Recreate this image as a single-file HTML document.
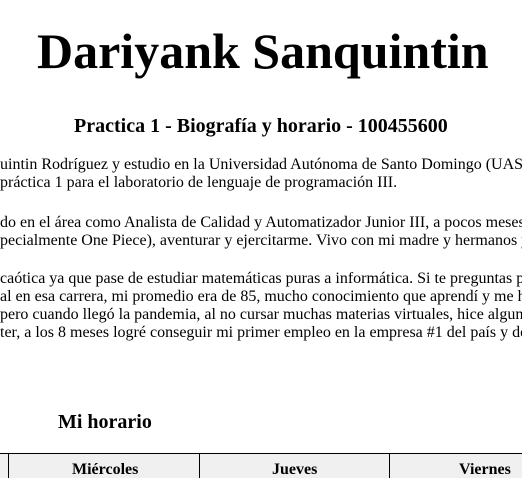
<!DOCTYPE html>
<html><head><meta charset="utf-8"><style>
html,body{margin:0;padding:0;width:522px;height:478px;overflow:hidden;background:#fff;font-family:"Liberation Serif",serif;color:#000;position:relative}
.a{position:absolute;white-space:nowrap}
.p{font-size:16px;left:0;width:522px;overflow:hidden}
</style></head><body>
<div class="a" style="left:37px;top:21px;font-size:50px;font-weight:bold;line-height:60px">Dariyank Sanquintin</div>
<div class="a" style="left:74px;top:115px;font-size:20px;font-weight:bold;line-height:23px">Practica 1 - Biografía y horario - 100455600</div>
<div class="a p" style="top:156px;line-height:18px">uintin Rodríguez y estudio en la Universidad Autónoma de Santo Domingo (UASD)<br>práctica 1 para el laboratorio de lenguaje de programación III.</div>
<div class="a p" style="top:214px;line-height:18px">do en el área como Analista de Calidad y Automatizador Junior III, a pocos meses de<br>pecialmente One Piece), aventurar y ejercitarme. Vivo con mi madre y hermanos y</div>
<div class="a p" style="top:270px;line-height:18px">caótica ya que pase de estudiar matemáticas puras a informática. Si te preguntas por<br>al en esa carrera, mi promedio era de 85, mucho conocimiento que aprendí y me hubiera<br>pero cuando llegó la pandemia, al no cursar muchas materias virtuales, hice algunos<br>ter, a los 8 meses logré conseguir mi primer empleo en la empresa #1 del país y de</div>
<div class="a" style="left:58px;top:411px;font-size:20px;font-weight:bold;line-height:23px">Mi horario</div>
<div class="a" style="left:0;top:453px;width:522px;height:25px;background:#f0f0f0;border-top:1px solid #000"></div>
<div class="a" style="left:8px;top:453px;width:1px;height:25px;background:#000"></div>
<div class="a" style="left:199px;top:453px;width:1px;height:25px;background:#000"></div>
<div class="a" style="left:389px;top:453px;width:1px;height:25px;background:#000"></div>
<div class="a" style="left:72px;top:461px;font-size:16px;font-weight:bold;line-height:18px">Miércoles</div>
<div class="a" style="left:272px;top:461px;font-size:16px;font-weight:bold;line-height:18px">Jueves</div>
<div class="a" style="left:459px;top:461px;font-size:16px;font-weight:bold;line-height:18px">Viernes</div>
</body></html>
